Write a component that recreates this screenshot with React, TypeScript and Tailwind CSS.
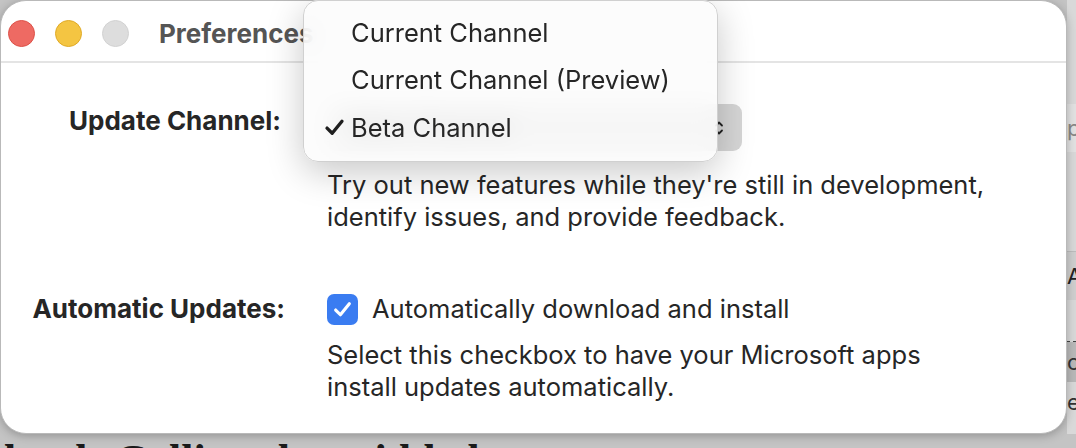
import React from 'react';

const font = { fontFamily: 'Inter, "Noto Sans", "Liberation Sans", sans-serif' };

function TrafficLights() {
  return (
    <div className="flex items-center gap-[20px] pl-[7px]">
      <span className="block h-[27px] w-[27px] rounded-full border border-[#dd5148] bg-[#ee6a63]" />
      <span className="block h-[27px] w-[27px] rounded-full border border-[#e0aa26] bg-[#f4c542]" />
      <span className="block h-[27px] w-[27px] rounded-full border border-[#d2d2d2] bg-[#dddddd]" />
    </div>
  );
}

function Chevrons() {
  return (
    <svg width="10" height="18" viewBox="0 0 10 18" fill="none" stroke="#222" strokeWidth="1.8" strokeLinecap="round" strokeLinejoin="round">
      <path d="M2 6.5 L5 3.5 L8 6.5" />
      <path d="M2 11.5 L5 14.5 L8 11.5" />
    </svg>
  );
}

function Check({ size = 18, color = '#222', width = 2.4 }: { size?: number; color?: string; width?: number }) {
  return (
    <svg width={size} height={size} viewBox="0 0 20 20" fill="none" stroke={color} strokeWidth={width} strokeLinecap="round" strokeLinejoin="round">
      <path d="M3.5 10.5 L8 15 L16.5 4.5" />
    </svg>
  );
}

function ChannelMenu() {
  const items = ['Current Channel', 'Current Channel (Preview)', 'Beta Channel'];
  return (
    <div className="absolute left-[302px] top-[-1px] z-20 flex h-[162px] w-[415px] flex-col rounded-[15px] border border-[#d0d0d0] bg-[#fbfbfb]/85 pt-[8px] shadow-[0_10px_36px_rgba(0,0,0,0.22)] backdrop-blur-md">
      {items.map((item, i) => (
        <div key={item} className="flex h-[47.5px] items-center text-[25.5px] text-[#262626]">
          <span className="flex w-[47px] justify-end pr-[5px]">
            {i === 2 && <Check size={23} color="#1f1f1f" width={2.9} />}
          </span>
          <span>{item}</span>
        </div>
      ))}
    </div>
  );
}

export default function App() {
  return (
    <div className="relative h-[448px] w-[1076px] overflow-hidden bg-[#c4c4c4]" style={font}>
      <div className="flex">
        {/* preferences window */}
        <div className="relative z-10 flex h-[434px] w-[1067px] shrink-0 flex-col rounded-[26px] border border-[#b9b9b9] bg-white shadow-[0_2px_10px_rgba(0,0,0,0.25)]">
          <div className="flex h-[62px] items-center gap-[30px] border-b-2 border-[#e4e4e4] pt-[4px]">
            <TrafficLights />
            <span className="text-[26px] font-bold text-[#555]">Preferences</span>
          </div>

          <div className="grid grid-cols-[284px_1fr] gap-x-[42px] pt-[41px] text-[25.5px] text-[#262626]">
            <div className="pr-[4px] pt-[1px] text-right text-[26px] font-bold leading-[32px]">Update Channel:</div>
            <div>
              <div className="flex h-[47px] w-[415px] items-center justify-between rounded-[9px] bg-[#d6d6d6] pl-[24px] pr-[18px]">
                <span className="text-[#333]">Beta Channel</span>
                <Chevrons />
              </div>
              <p className="mt-[18px] leading-[32px]">
                Try out new features while they're still in development,
                <br />
                identify issues, and provide feedback.
              </p>
            </div>

            <div className="mt-[60px] text-right text-[26px] font-bold leading-[32px]">Automatic Updates:</div>
            <div className="mt-[60px]">
              <div className="flex h-[32px] items-center gap-[14px]">
                <span className="flex h-[31px] w-[31px] items-center justify-center rounded-[7px] bg-[#3a7cf1]">
                  <Check size={21} color="#fff" width={3} />
                </span>
                <span>Automatically download and install</span>
              </div>
              <p className="mt-[14px] leading-[32px]">
                Select this checkbox to have your Microsoft apps
                <br />
                install updates automatically.
              </p>
            </div>
          </div>

          <ChannelMenu />
        </div>

        {/* sliver of the app behind */}
        <div className="flex w-[9px] flex-col overflow-hidden bg-[#d9d9d9] text-[22px] leading-none text-[#555]">
          <div className="h-[104px]" />
          <div className="flex h-[48px] items-center bg-[#e2e2e2] text-[#888]">p</div>
          <div className="h-[100px] border-b border-[#bdbdbd]" />
          <div className="flex h-[48px] items-center bg-[#cfcfcf] text-[#222]">A</div>
          <div className="h-[42px] border-b border-dashed border-[#444]" />
          <div className="flex h-[40px] items-center bg-[#b9b9b9] text-[#333]">c</div>
          <div className="flex h-[40px] items-center text-[#333]">e</div>
        </div>
      </div>

      {/* page behind the window */}
      <div
        className="mt-[5px] whitespace-nowrap pl-[4px] text-[44px] font-bold leading-none text-[#1a1a1a]"
        style={{ fontFamily: '"Liberation Serif", "DejaVu Serif", serif' }}
      >
        lands Calling the gridded
      </div>
    </div>
  );
}
